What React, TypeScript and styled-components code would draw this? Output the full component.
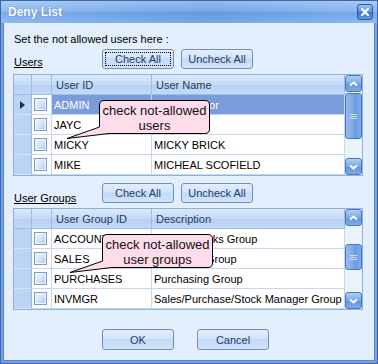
import { Fragment } from "react";
import styled, { createGlobalStyle } from "styled-components";

const GlobalStyle = createGlobalStyle`
  html, body {
    margin: 0;
    padding: 0;
  }
  body {
    font-family: "Liberation Sans", Arial, sans-serif;
    font-size: 11px;
    color: #000;
  }
`;

const Window = styled.div`
  width: 378px;
  height: 364px;
  box-sizing: border-box;
  display: flex;
  flex-direction: column;
  border: 1px solid #3c66ad;
  background: #76a3e0;
`;

const TitleBar = styled.div`
  height: 22px;
  flex: none;
  display: flex;
  align-items: center;
  justify-content: space-between;
  padding: 0 4px 0 7px;
  background: linear-gradient(90deg, rgba(255, 255, 255, 0.12), rgba(40, 80, 160, 0.1) 55%, rgba(255, 255, 255, 0.1)),
    linear-gradient(#9fc6f4, #7cafed 48%, #6b9fe5 50%, #7eb1ee);
`;

const Title = styled.span`
  color: #fff;
  font-weight: bold;
  font-size: 12px;
  text-shadow: 0 0 1px rgba(30, 60, 120, 0.6);
`;

const CloseButton = styled.div`
  width: 16px;
  height: 16px;
  box-sizing: border-box;
  border: 1px solid #2d5aa3;
  border-radius: 3px;
  background: linear-gradient(#9cc2f2, #5f90da 50%, #4274c8 52%, #5f95de);
  display: flex;
  align-items: center;
  justify-content: center;
`;

const Body = styled.div`
  flex: 1;
  margin: 0 2px 2px;
  border: 1px solid #5a86ca;
  border-top: none;
  background: #e3effc;
  padding: 9px 11px 0 9px;
  display: flex;
  flex-direction: column;
`;

const Intro = styled.div`
  line-height: 14px;
  padding-left: 1px;
`;

const Toolbar = styled.div<{ $gap: number }>`
  display: flex;
  align-items: flex-end;
  height: 20px;
  margin-top: ${(p) => p.$gap}px;
`;

const SectionLabel = styled.span<{ $drop: number }>`
  flex: 0 0 88px;
  margin-left: 1px;
  line-height: 13px;
  text-decoration: underline;
  margin-bottom: ${(p) => -p.$drop}px;
`;

const Button = styled.button<{ $focused?: boolean; $tall?: boolean }>`
  width: 72px;
  height: ${(p) => (p.$tall ? 21 : 20)}px;
  margin-right: 7px;
  padding: 0;
  box-sizing: border-box;
  border: 1px solid #7090c0;
  border-radius: 3px;
  background: linear-gradient(#e3eefc, #d4e4fa 45%, #c3d9f6 50%, #d1e3fa);
  font-family: "Liberation Sans", Arial, sans-serif;
  font-size: 11px;
  color: #1e3c6c;
  outline: ${(p) => (p.$focused ? "1px dotted #000" : "none")};
  outline-offset: -4px;
`;

const GridFrame = styled.div`
  position: relative;
  margin-top: 5px;
  height: 102px;
  box-sizing: border-box;
  border: 1px solid #8eb0df;
  background: #fff;
  display: flex;
  overflow: hidden;
`;

const Table = styled.div`
  flex: 1;
  display: grid;
  grid-template-columns: 18px 20px 100px 1fr;
  grid-auto-rows: 20px;
  align-content: start;
`;

const HeadCell = styled.div`
  box-sizing: border-box;
  border-right: 1px solid #9ebde6;
  border-bottom: 1px solid #9ebde6;
  background: linear-gradient(#d9e8fb, #c6dbf6 50%, #b6cff2 52%, #c4daf6);
  color: #1d3b66;
  padding-left: 4px;
  display: flex;
  align-items: center;
  white-space: nowrap;
`;

const RowHead = styled.div`
  box-sizing: border-box;
  border-right: 1px solid #9ebde6;
  border-bottom: 1px solid #d6e4f8;
  background: #bcd3f2;
  display: flex;
  align-items: center;
  padding-left: 6px;
`;

const CheckCell = styled.div`
  box-sizing: border-box;
  border-right: 1px solid #c6d8f0;
  border-bottom: 1px solid #c6d8f0;
  display: flex;
  align-items: center;
  padding-left: 2px;
`;

const CheckBox = styled.div`
  width: 13px;
  height: 13px;
  box-sizing: border-box;
  border: 1px solid #7b9cc9;
  box-shadow: inset 0 0 0 1px #eef4fd;
  background: linear-gradient(135deg, #f5f9ff, #d3e2f7 55%, #a9c4ec);
`;

const DataCell = styled.div<{ $selected?: boolean }>`
  box-sizing: border-box;
  border-right: 1px solid #c6d8f0;
  border-bottom: 1px solid #c6d8f0;
  background: ${(p) => (p.$selected ? "#7b9cda" : "#fff")};
  color: ${(p) => (p.$selected ? "#fff" : "#000")};
  padding-left: 2px;
  display: flex;
  align-items: center;
  white-space: nowrap;
  overflow: hidden;
`;

const ScrollBar = styled.div`
  width: 17px;
  flex: none;
  display: flex;
  flex-direction: column;
  background: #eaf2fc;
`;

const ScrollButton = styled.div<{ $bottom?: boolean }>`
  height: 17px;
  flex: none;
  box-sizing: border-box;
  border: 1px solid #4a78bf;
  border-radius: 3px;
  margin-top: ${(p) => (p.$bottom ? "auto" : "0")};
  background: linear-gradient(#aecdf3, #7ea9e7 50%, #6393dd 52%, #7eadea);
  display: flex;
  align-items: center;
  justify-content: center;
`;

const Thumb = styled.div<{ $top: number; $height: number }>`
  margin-top: ${(p) => p.$top}px;
  height: ${(p) => p.$height}px;
  flex: none;
  box-sizing: border-box;
  border: 1px solid #4a78bf;
  border-radius: 3px;
  background: linear-gradient(90deg, #98bdee, #7ba7e6 50%, #6696de 52%, #7eabea);
  display: flex;
  align-items: center;
  justify-content: center;
`;

const Callout = styled.div<{ $left: number }>`
  position: absolute;
  left: ${(p) => p.$left}px;
  top: 25px;
  width: 145px;
  height: 40px;
  z-index: 2;
`;

const CalloutShape = styled.svg`
  position: absolute;
  left: 0;
  top: 0;
`;

const CalloutText = styled.div`
  position: relative;
  margin-left: 33px;
  margin-top: 1px;
  width: 111px;
  height: 33px;
  display: flex;
  flex-direction: column;
  justify-content: center;
  align-items: center;
  font-size: 13px;
  line-height: 15px;
  color: #111;
`;

const Footer = styled.div`
  display: flex;
  margin-top: 19px;
  padding-left: 89px;
  gap: 16px;
`;

const Chevron = ({ down }: { down?: boolean }) => (
  <svg width="9" height="6" viewBox="0 0 9 6">
    <polyline
      points={down ? "1,1.5 4.5,4.5 8,1.5" : "1,4.5 4.5,1.5 8,4.5"}
      fill="none"
      stroke="#fff"
      strokeWidth="2"
    />
  </svg>
);

const Grip = () => (
  <svg width="7" height="5" viewBox="0 0 7 5">
    <path d="M0 0.5H7M0 2.5H7M0 4.5H7" stroke="#c9dcf7" strokeWidth="1" />
  </svg>
);

const Pointer = () => (
  <svg width="5" height="8" viewBox="0 0 5 8">
    <polygon points="0,0 5,4 0,8" fill="#15316b" />
  </svg>
);

type Row = { id: string; name: string; selected?: boolean };

const users: Row[] = [
  { id: "ADMIN", name: "Administrator", selected: true },
  { id: "JAYC", name: "JAY C" },
  { id: "MICKY", name: "MICKY BRICK" },
  { id: "MIKE", name: "MICHEAL SCOFIELD" },
];

const groups: Row[] = [
  { id: "ACCOUNTS", name: "Cash & Banks Group" },
  { id: "SALES", name: "Salesmen Group" },
  { id: "PURCHASES", name: "Purchasing Group" },
  { id: "INVMGR", name: "Sales/Purchase/Stock Manager Group" },
];

type GridProps = {
  cols: [string, string];
  rows: Row[];
  thumbTop: number;
  thumbHeight: number;
  tip: string[];
  tipLeft: number;
};

const DataGrid = ({ cols, rows, thumbTop, thumbHeight, tip, tipLeft }: GridProps) => (
  <GridFrame>
    <Table>
      <HeadCell />
      <HeadCell />
      <HeadCell>{cols[0]}</HeadCell>
      <HeadCell>{cols[1]}</HeadCell>
      {rows.map((r) => (
        <Fragment key={r.id}>
          <RowHead>{r.selected && <Pointer />}</RowHead>
          <CheckCell>
            <CheckBox />
          </CheckCell>
          <DataCell $selected={r.selected}>{r.id}</DataCell>
          <DataCell $selected={r.selected}>{r.name}</DataCell>
        </Fragment>
      ))}
    </Table>
    <ScrollBar>
      <ScrollButton>
        <Chevron />
      </ScrollButton>
      <Thumb $top={thumbTop} $height={thumbHeight}>
        <Grip />
      </Thumb>
      <ScrollButton $bottom>
        <Chevron down />
      </ScrollButton>
    </ScrollBar>
    <Callout $left={tipLeft}>
      <CalloutShape width="145" height="40" viewBox="0 0 145 40">
        <path
          d="M38 0.5H139Q143.5 0.5 143.5 5V29Q143.5 33.5 139 33.5H43L1 38.5L33.5 27V5Q33.5 0.5 38 0.5Z"
          fill="#ffdcea"
          stroke="#000"
          strokeWidth="1"
        />
      </CalloutShape>
      <CalloutText>
        {tip.map((t) => (
          <span key={t}>{t}</span>
        ))}
      </CalloutText>
    </Callout>
  </GridFrame>
);

const App = () => {
  return (
    <>
      <GlobalStyle />
      <Window>
        <TitleBar>
          <Title>Deny List</Title>
          <CloseButton>
            <svg width="8" height="8" viewBox="0 0 8 8">
              <path d="M1 1L7 7M7 1L1 7" stroke="#fff" strokeWidth="2.2" strokeLinecap="square" />
            </svg>
          </CloseButton>
        </TitleBar>
        <Body>
          <Intro>Set the not allowed users here :</Intro>
          <Toolbar $gap={3}>
            <SectionLabel $drop={0}>Users</SectionLabel>
            <Button $focused>Check All</Button>
            <Button>Uncheck All</Button>
          </Toolbar>
          <DataGrid
            cols={["User ID", "User Name"]}
            rows={users}
            thumbTop={1}
            thumbHeight={46}
            tip={["check not-allowed", "users"]}
            tipLeft={52}
          />
          <Toolbar $gap={7}>
            <SectionLabel $drop={2}>User Groups</SectionLabel>
            <Button>Check All</Button>
            <Button>Uncheck All</Button>
          </Toolbar>
          <DataGrid
            cols={["User Group ID", "Description"]}
            rows={groups}
            thumbTop={18}
            thumbHeight={26}
            tip={["check not-allowed", "user groups"]}
            tipLeft={55}
          />
          <Footer>
            <Button $tall>OK</Button>
            <Button $tall>Cancel</Button>
          </Footer>
        </Body>
      </Window>
    </>
  );
};

export default App;
